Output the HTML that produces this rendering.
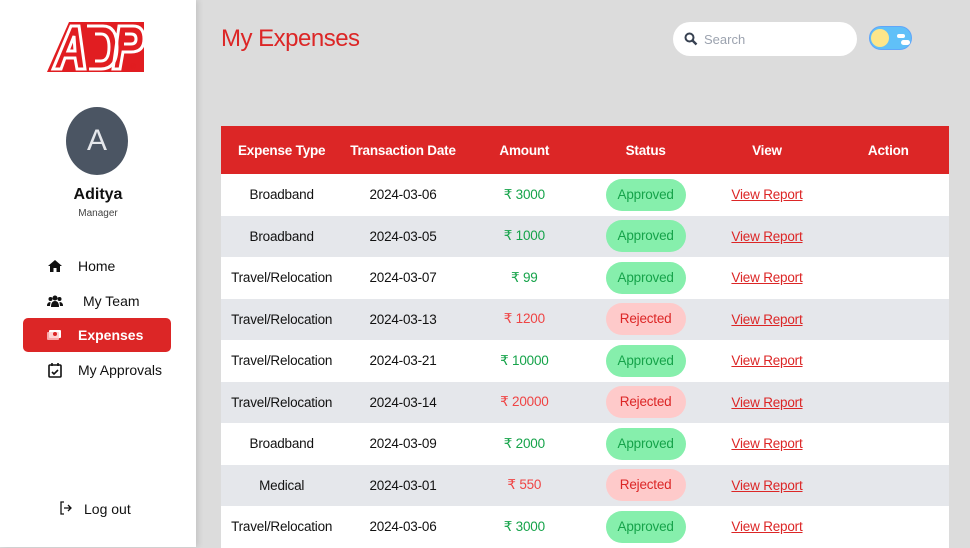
<!DOCTYPE html>
<html><head><style>
*{margin:0;padding:0;box-sizing:border-box}
body{width:970px;height:547px;overflow:hidden;background:#dcdcdc;font-family:"Liberation Sans",sans-serif;position:relative}
.side{position:absolute;left:0;top:0;width:196px;height:547px;background:#fff;box-shadow:2px 0 6px rgba(0,0,0,.12)}
.nav{position:absolute;left:23px;width:148px;height:34px;font-size:14px;color:#111;display:flex;align-items:center}
.nav .ic{position:absolute;left:24px;top:9px;width:16px;height:16px}
.nav span.t{position:absolute;left:55px}
.act{background:#dc2626;color:#fff;border-radius:5px}
h1{position:absolute;left:221px;top:25px;font-size:24px;font-weight:normal;color:#dc2626;letter-spacing:-0.5px}
.search{position:absolute;left:673px;top:22px;width:184px;height:34px;background:#fff;border-radius:17px}
.search span{position:absolute;left:31px;top:10px;font-size:13px;color:#9ca3af}
table{position:absolute;left:221px;top:126px;width:728px;border-collapse:collapse;font-size:13.5px;table-layout:fixed}
th{background:#dc2626;color:#fff;height:48px;font-weight:bold;font-size:13.5px;width:121px;letter-spacing:-0.2px}
td{height:41.5px;text-align:center;color:#111;letter-spacing:-0.2px}
tr:nth-child(odd) td{background:#e5e7eb}
tr:nth-child(even) td{background:#fff}
.g{color:#16a34a}.r{color:#ef4444}
.b{display:inline-block;width:80px;height:32px;line-height:32px;border-radius:16px;font-size:13.5px}
.ap{background:#86efac;color:#16a34a}.rj{background:#fecaca;color:#dc2626}
a{color:#dc2626;text-decoration:underline}
</style></head><body>
<div class="side">
<svg style="position:absolute;left:47px;top:22px" width="102" height="52" viewBox="0 0 102 52">
<path d="M0 50 L22 0 L100 0 L100 50 Z" fill="#e11d21"/>
<path d="M0 50 L22 0 L30 0 L14 40" fill="#fff" opacity="0"/>
<g fill="none" stroke="#fff" stroke-width="3" stroke-linejoin="miter">
<path d="M6 47 L24 4 L32 4 L38 47 L30 47 L28 36 L18 36 L14 47 Z"/>
<path d="M21 29 L28 29 L27 14 Z"/>
<path d="M40 4 L56 4 Q70 4 70 25 Q70 47 54 47 L42 47"/>
<path d="M48 12 L54 12 Q62 12 62 25 Q62 39 54 39 L48 39"/>
<path d="M66 47 L72 4 L86 4 Q97 4 97 17 Q97 30 84 30 L76 30 L73 47 Z"/>
<path d="M78 12 L84 12 Q89 12 89 17 Q89 22 84 22 L77 22"/>
</g>
<path d="M97 50 L100 50 L100 0 L97 0Z" fill="#fff"/>
</svg>
<div style="position:absolute;left:130px;top:62px;font-size:8px;color:#e11d21">®</div>
<div style="position:absolute;left:66px;top:107px;width:62px;height:68px;border-radius:50%;background:#4b5563;color:#e5e7eb;font-size:30px;text-align:center;line-height:68px">A</div>
<div style="position:absolute;left:0;width:196px;top:186px;text-align:center;font-size:16px;font-weight:bold;color:#111">Aditya</div>
<div style="position:absolute;left:0;width:196px;top:208px;text-align:center;font-size:10px;color:#444">Manager</div>
<div class="nav" style="top:249px"><svg class="ic" viewBox="0 0 16 16"><path d="M8 2 L1 8 L3 8 L3 14 L6.5 14 L6.5 10 L9.5 10 L9.5 14 L13 14 L13 8 L15 8Z" fill="#111"/></svg><span class="t">Home</span></div>
<div class="nav" style="top:284px"><svg class="ic" viewBox="0 0 16 16"><circle cx="8" cy="5" r="2.5" fill="#111"/><circle cx="3.5" cy="6" r="2" fill="#111"/><circle cx="12.5" cy="6" r="2" fill="#111"/><path d="M4 14 Q4 8 8 8 Q12 8 12 14Z M0 13 Q0 9 3.5 9 L3 13Z M16 13 Q16 9 12.5 9 L13 13Z" fill="#111"/></svg><span class="t" style="left:60px">My Team</span></div>
<div class="nav act" style="top:318px"><svg class="ic" viewBox="0 0 16 16"><rect x="2" y="3" width="12" height="8" rx="1" fill="#fff"/><rect x="0" y="5" width="12" height="8" rx="1" fill="#fecaca" opacity=".8"/><circle cx="8" cy="7" r="2" fill="#dc2626"/></svg><span class="t" style="font-weight:bold">Expenses</span></div>
<div class="nav" style="top:353px"><svg class="ic" viewBox="0 0 16 16" fill="none" stroke="#111" stroke-width="1.6"><rect x="2" y="3" width="12" height="12" rx="1"/><path d="M5 1v3M11 1v3M5 10l2 2 4-4"/></svg><span class="t">My Approvals</span></div>
<div style="position:absolute;left:60px;top:501px;font-size:14px;color:#111"><svg width="12" height="14" viewBox="0 0 12 14" fill="none" stroke="#111" stroke-width="1.3" style="vertical-align:-1px"><path d="M4 1H1v12h3M4 7h7M8 4l3 3-3 3"/></svg><span style="margin-left:12px">Log out</span></div>
</div>
<h1>My Expenses</h1>
<div class="search"><svg style="position:absolute;left:11px;top:10px" width="14" height="14" viewBox="0 0 14 14"><circle cx="5.5" cy="5.5" r="4" fill="none" stroke="#374151" stroke-width="2"/><path d="M8.5 8.5 L12.5 12.5" stroke="#374151" stroke-width="2.4"/></svg><span>Search</span></div>
<div style="position:absolute;left:869px;top:26px;width:43px;height:24px;border-radius:12px;background:#60c0f8;border:1px solid #60a5fa"><div style="position:absolute;left:1px;top:2px;width:18px;height:18px;border-radius:50%;background:#fde68a"></div><div style="position:absolute;left:27px;top:7px;width:8px;height:4px;border-radius:2px;background:#fff"></div><div style="position:absolute;left:31px;top:13px;width:9px;height:5px;border-radius:3px;background:#fff"></div></div>
<table>
<tr><th>Expense Type</th><th>Transaction Date</th><th>Amount</th><th>Status</th><th>View</th><th>Action</th></tr>
<tr><td>Broadband</td><td>2024-03-06</td><td class="g">₹ 3000</td><td><span class="b ap">Approved</span></td><td><a>View Report</a></td><td></td></tr>
<tr><td>Broadband</td><td>2024-03-05</td><td class="g">₹ 1000</td><td><span class="b ap">Approved</span></td><td><a>View Report</a></td><td></td></tr>
<tr><td>Travel/Relocation</td><td>2024-03-07</td><td class="g">₹ 99</td><td><span class="b ap">Approved</span></td><td><a>View Report</a></td><td></td></tr>
<tr><td>Travel/Relocation</td><td>2024-03-13</td><td class="r">₹ 1200</td><td><span class="b rj">Rejected</span></td><td><a>View Report</a></td><td></td></tr>
<tr><td>Travel/Relocation</td><td>2024-03-21</td><td class="g">₹ 10000</td><td><span class="b ap">Approved</span></td><td><a>View Report</a></td><td></td></tr>
<tr><td>Travel/Relocation</td><td>2024-03-14</td><td class="r">₹ 20000</td><td><span class="b rj">Rejected</span></td><td><a>View Report</a></td><td></td></tr>
<tr><td>Broadband</td><td>2024-03-09</td><td class="g">₹ 2000</td><td><span class="b ap">Approved</span></td><td><a>View Report</a></td><td></td></tr>
<tr><td>Medical</td><td>2024-03-01</td><td class="r">₹ 550</td><td><span class="b rj">Rejected</span></td><td><a>View Report</a></td><td></td></tr>
<tr><td>Travel/Relocation</td><td>2024-03-06</td><td class="g">₹ 3000</td><td><span class="b ap">Approved</span></td><td><a>View Report</a></td><td></td></tr>
</table>
</body></html>
